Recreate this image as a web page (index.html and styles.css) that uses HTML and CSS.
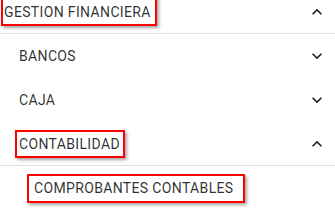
FILE: index.html
```html
<!DOCTYPE html>
<html lang="es">
  <head>
    <meta charset="UTF-8" />
    <meta name="viewport" content="width=device-width, initial-scale=1.0" />
    <title>Menu</title>
    <link rel="stylesheet" href="styles.css">
  </head>
  <body>
    <div id="menu">
      <div class="panel-header open level-0">
        <span class="label mark mark-1">GESTION FINANCIERA</span>
        <svg class="chevron" viewBox="0 0 24 24"><path d="M12 8l-6 6 1.41 1.41L12 10.83l4.59 4.58L18 14z"/></svg>
      </div>

      <div class="panel-body">
        <div class="panel-header level-1">
          <span class="label">BANCOS</span>
          <svg class="chevron" viewBox="0 0 24 24"><path d="M16.59 8.59L12 13.17 7.41 8.59 6 10l6 6 6-6z"/></svg>
        </div>
        <div class="panel-header level-1">
          <span class="label">CAJA</span>
          <svg class="chevron" viewBox="0 0 24 24"><path d="M16.59 8.59L12 13.17 7.41 8.59 6 10l6 6 6-6z"/></svg>
        </div>
        <div class="panel-header open level-1">
          <span class="label mark mark-2">CONTABILIDAD</span>
          <svg class="chevron" viewBox="0 0 24 24"><path d="M12 8l-6 6 1.41 1.41L12 10.83l4.59 4.58L18 14z"/></svg>
        </div>
        <div class="panel-body">
          <div class="item level-2">
            <span class="label mark mark-3">COMPROBANTES CONTABLES</span>
          </div>
        </div>
      </div>
    </div>
  </body>
</html>
```

FILE: styles.css
```css
* {
  box-sizing: border-box;
  margin: 0;
  padding: 0;
}
body {
  background-color: #fff;
  font-family: Roboto, "Liberation Sans", sans-serif;
  font-size: 14px;
  color: rgba(0, 0, 0, 0.82);
  overflow: hidden;
}
#menu {
  width: 335px;
  margin-top: -10px;
}
.panel-header,
.item {
  height: 44px;
  display: flex;
  align-items: center;
  justify-content: space-between;
  padding-right: 8px;
}
.panel-header.open {
  border-bottom: 1px solid #e0e0e0;
}
.level-0 {
  padding-left: 4px;
}
.level-1 {
  padding-left: 19px;
}
.level-2 {
  padding-left: 34px;
}
.label {
  position: relative;
  letter-spacing: 0.35px;
}
.chevron {
  width: 20px;
  height: 20px;
  fill: #222;
}
/* cuadros rojos de anotacion */
.mark::after {
  content: "";
  position: absolute;
  border: 2px solid #f00;
  box-shadow: 2px 2px 3px rgba(0, 0, 0, 0.35);
}
.mark-1::after {
  left: -3px;
  right: -6px;
  top: -7px;
  bottom: -6px;
}
.mark-2::after {
  left: -4px;
  right: -5px;
  top: -6px;
  bottom: -6px;
}
.mark-3::after {
  left: -7px;
  right: -11px;
  top: -6px;
  bottom: -7px;
}
```
